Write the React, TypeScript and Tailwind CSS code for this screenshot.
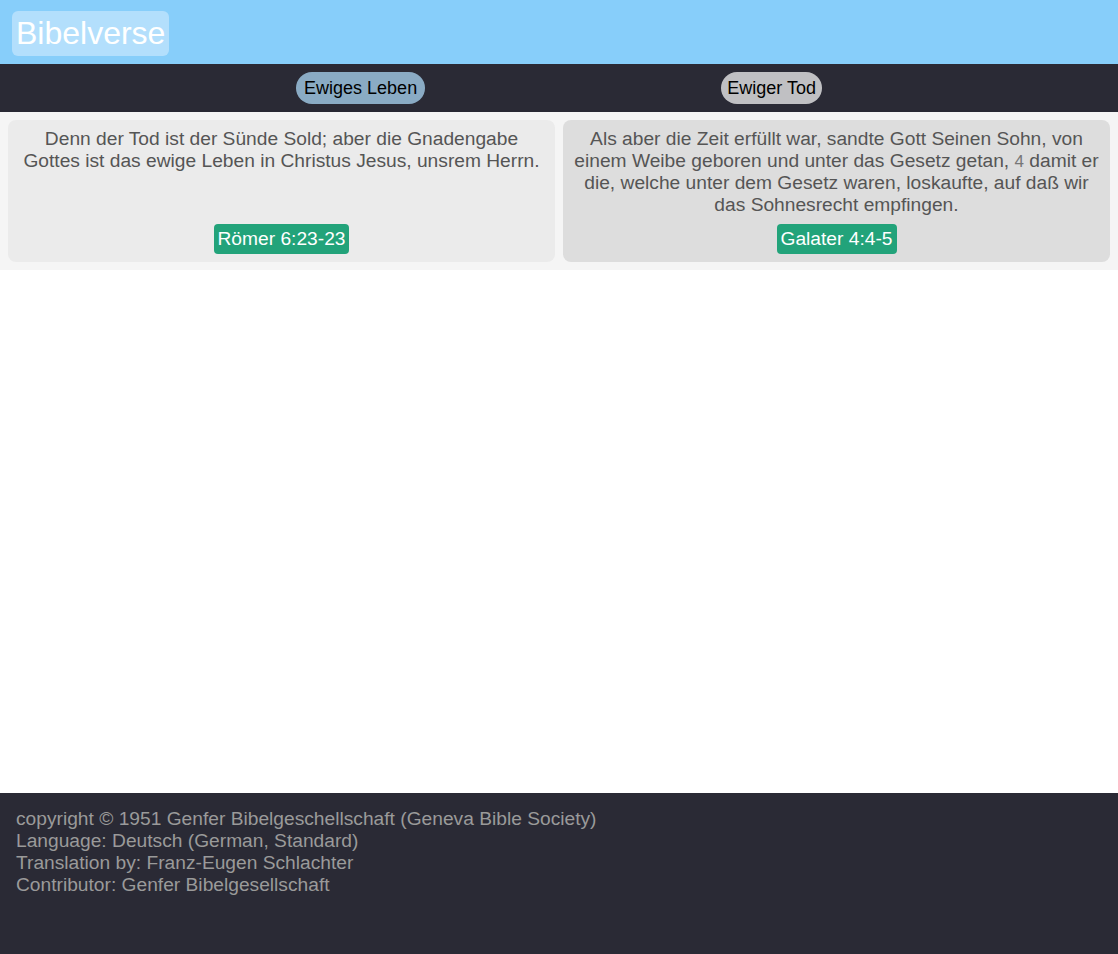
const verses = [
  {
    ref: 'Römer 6:23-23',
    bg: 'bg-[#ebebeb]',
    text: <>Denn der Tod ist der Sünde Sold; aber die Gnadengabe Gottes ist das ewige Leben in Christus Jesus, unsrem Herrn.</>,
  },
  {
    ref: 'Galater 4:4-5',
    bg: 'bg-[#dddddd]',
    text: (
      <>
        Als aber die Zeit erfüllt war, sandte Gott Seinen Sohn, von einem Weibe geboren und unter das Gesetz getan,{' '}
        <span className="text-[17px] leading-none text-[#777777]">4</span> damit er die, welche unter dem Gesetz waren, loskaufte, auf daß wir das Sohnesrecht empfingen.
      </>
    ),
  },
]

export default function App() {
  return (
    <div className="min-h-screen flex flex-col bg-white font-['Liberation_Sans',Arial,sans-serif]">
      {/* Header */}
      <header className="h-16 bg-[#87cefa] flex items-center px-3 pt-[3px]">
        <h1 className="rounded-md bg-[#b3dffc] px-1 py-1 text-[32px] leading-[37px] text-white">Bibelverse</h1>
      </header>

      {/* Tabs */}
      <nav className="h-12 bg-[#2a2a35] flex items-center justify-evenly">
        <button className="h-8 rounded-full bg-[#8aabc4] px-2 text-[18px] leading-[22px] text-black">Ewiges Leben</button>
        <button className="h-8 rounded-full bg-[#c0c0c3] px-[6px] text-[18px] leading-[22px] text-black">Ewiger Tod</button>
      </nav>

      {/* Verses */}
      <section className="bg-[#f5f5f5] p-2 grid grid-cols-2 gap-2">
        {verses.map((v) => (
          <div key={v.ref} className={`${v.bg} rounded-lg px-2 pt-2 pb-2 flex flex-col items-center gap-2 text-center`}>
            <p className="text-[19.2px] leading-[22px] text-[#555555]">{v.text}</p>
            <span className="mt-auto rounded bg-[#22a37a] px-1 py-1 text-[19.2px] leading-[22px] text-white">{v.ref}</span>
          </div>
        ))}
      </section>

      <div className="flex-1" />

      {/* Footer */}
      <footer className="h-[161px] bg-[#2a2a35] px-4 pt-[15px] text-[19.2px] leading-[22px] text-[#9a9a9a]">
        <div>copyright © 1951 Genfer Bibelgeschellschaft (Geneva Bible Society)</div>
        <div>Language: Deutsch (German, Standard)</div>
        <div>Translation by: Franz-Eugen Schlachter</div>
        <div>Contributor: Genfer Bibelgesellschaft</div>
      </footer>
    </div>
  )
}
